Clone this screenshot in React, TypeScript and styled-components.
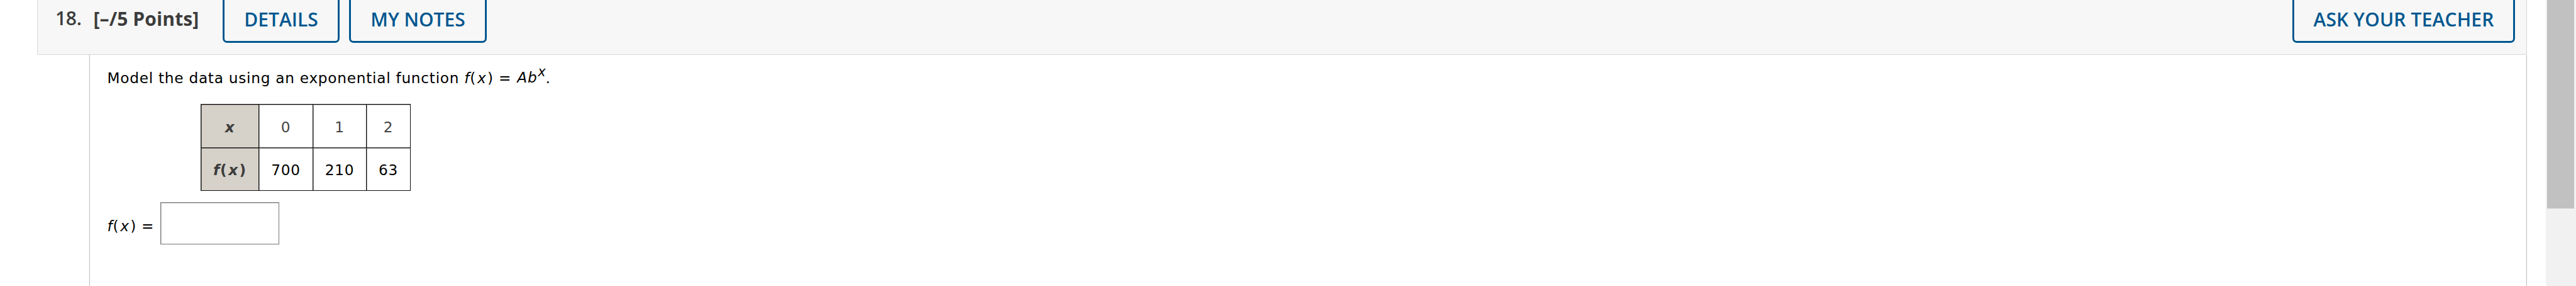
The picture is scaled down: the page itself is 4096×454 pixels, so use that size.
import React from 'react';
import styled, { createGlobalStyle } from 'styled-components';

const columns = [
  { x: '0', y: '700', width: 86 },
  { x: '1', y: '210', width: 85 },
  { x: '2', y: '63', width: 70 },
];

const FunctionOfX: React.FC = () => (
  <>
    <i>f</i>(<Variable>x</Variable>)
  </>
);

const App: React.FC = () => {
  return (
    <Page>
      <GlobalStyle />
      <Main>
        <QuestionHeader>
          <QuestionNumber>18.</QuestionNumber>
          <Points>[–/5 Points]</Points>
          <HeaderButton $width={186}>DETAILS</HeaderButton>
          <HeaderButton $width={219}>MY NOTES</HeaderButton>
          <Spacer />
          <HeaderButton $width={354} $spacing={0.13}>ASK YOUR TEACHER</HeaderButton>
        </QuestionHeader>
        <QuestionBody>
          <Prompt>
            Model the data using an exponential function <FunctionOfX /> = <Base>Ab</Base>
            <Exponent>x</Exponent>.
          </Prompt>
          <DataTable>
            <tbody>
              <tr>
                <HeadCell>
                  <i>x</i>
                </HeadCell>
                {columns.map((col) => (
                  <DataCell key={col.x} $width={col.width} $muted>{col.x}</DataCell>
                ))}
              </tr>
              <tr>
                <HeadCell>
                  <FunctionOfX />
                </HeadCell>
                {columns.map((col) => (
                  <DataCell key={col.y} $width={col.width}>{col.y}</DataCell>
                ))}
              </tr>
            </tbody>
          </DataTable>
          <AnswerRow>
            <AnswerLabel>
              <FunctionOfX /> =
            </AnswerLabel>
            <AnswerInput type="text" />
          </AnswerRow>
        </QuestionBody>
      </Main>
      <ScrollTrack>
        <ScrollThumb />
      </ScrollTrack>
    </Page>
  );
};

export default App;

const GlobalStyle = createGlobalStyle`
  * {
    box-sizing: border-box;
  }
  body {
    margin: 0;
    background: #fff;
    overflow: hidden;
  }
`;

const Page = styled.div`
  display: flex;
  width: 4096px;
  height: 454px;
  overflow: hidden;
`;

const Main = styled.div`
  display: flex;
  flex-direction: column;
  flex: 1;
  padding: 0 30px 0 59px;
`;

const QuestionHeader = styled.div`
  display: flex;
  align-items: flex-start;
  flex-shrink: 0;
  height: 87px;
  padding: 0 18px 0 28px;
  background: #f7f7f7;
  border: 1px solid #d6d6d6;
  border-top: none;
  border-radius: 0 0 3px 3px;
  font-family: 'Open Sans', sans-serif;
  font-size: 30px;
  color: #3c3c3c;
`;

const QuestionNumber = styled.div`
  width: 60.5px;
  font-weight: 600;
  line-height: 57px;
  letter-spacing: -0.3px;
`;

const Points = styled.div`
  width: 205.5px;
  font-weight: 700;
  line-height: 60px;
  letter-spacing: 0.12px;
  white-space: nowrap;
`;

const HeaderButton = styled.button<{ $width: number; $spacing?: number }>`
  width: ${({ $width }) => $width}px;
  height: 75px;
  margin: -7px 15px 0 0;
  padding: 0 0 1px;
  background: transparent;
  border: 3px solid #00578f;
  border-radius: 7px;
  color: #00578f;
  font-family: inherit;
  font-size: 30px;
  font-weight: 600;
  letter-spacing: ${({ $spacing = 0 }) => $spacing}px;
  white-space: nowrap;

  &:last-child {
    margin-right: 0;
  }
`;

const Spacer = styled.div`
  flex: 1;
`;

const QuestionBody = styled.div`
  flex: 1;
  margin-left: 83px;
  padding: 22px 0 0 27.5px;
  border: 1px solid #bdbdbd;
  border-width: 0 1px;
  font-family: 'DejaVu Sans', sans-serif;
  font-size: 23.2px;
  letter-spacing: 0.75px;
  color: #000;
`;

const Prompt = styled.p`
  height: 30px;
  margin: 0;
  line-height: 30px;
`;

const Variable = styled.i`
  margin: 0 1.5px 0 2px;
`;

const Base = styled.i`
  margin-left: 1px;
  line-height: 0;
  vertical-align: 1.4px;
`;

const Exponent = styled.i`
  margin: 0 -1px 0 1px;
  font-size: 20.8px;
  line-height: 0;
  vertical-align: 11.4px;
`;

const DataTable = styled.table`
  margin: 26px 0 0 148.5px;
  border-collapse: separate;
  border-spacing: 0;
  border: 1px solid #111;
  border-width: 0 1px 1px 0;
`;

const HeadCell = styled.th`
  width: 92px;
  height: 68.5px;
  padding: 3px 0 0;
  background: #d6d1c9;
  border: 1px solid #111;
  border-width: 1px 0 0 1px;
  box-shadow: inset 1px 1px 0 rgba(0, 0, 0, 0.4);
  color: #3c3c3c;
  font-weight: 700;
  text-align: center;
`;

const DataCell = styled.td<{ $width: number; $muted?: boolean }>`
  width: ${({ $width }) => $width}px;
  padding: 3px 0 0;
  border: 1px solid #111;
  border-width: 1px 0 0 1px;
  box-shadow: inset 1px 1px 0 rgba(0, 0, 0, 0.4);
  color: ${({ $muted }) => ($muted ? '#444' : '#000')};
  text-align: center;
`;

const AnswerRow = styled.div`
  display: flex;
  align-items: center;
  margin-top: 18px;
`;

const AnswerLabel = styled.label`
  width: 84.5px;
  padding-top: 8px;
  line-height: 30px;
  white-space: nowrap;
`;

const AnswerInput = styled.input`
  width: 189px;
  height: 67px;
  border: 1px solid #767676;
  border-radius: 0;
  box-shadow: inset 1px 1px 0 #ccc;
  outline: none;
`;

const ScrollTrack = styled.div`
  width: 48px;
  padding: 0 3px 0 2px;
  background: #f1f1f1;
`;

const ScrollThumb = styled.div`
  height: 331px;
  background: #c1c1c1;
`;
